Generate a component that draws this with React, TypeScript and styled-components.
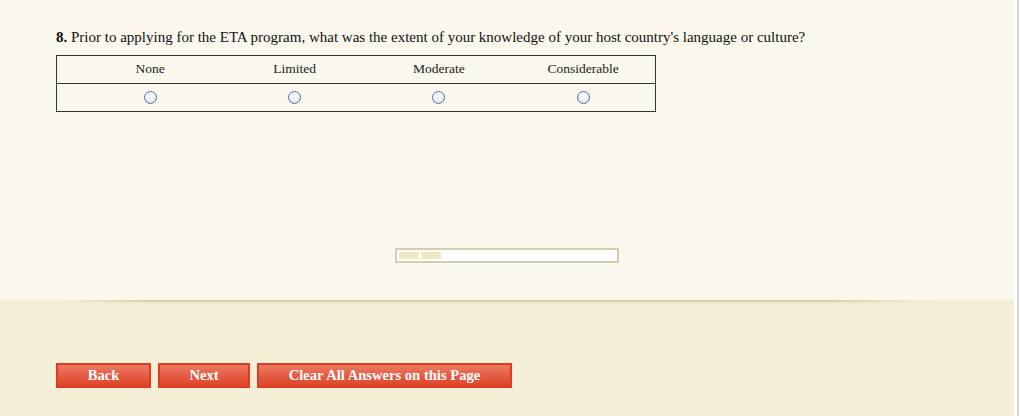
import { FC } from 'react';
import styled, { createGlobalStyle } from 'styled-components';

const options = ['None', 'Limited', 'Moderate', 'Considerable'];

const App: FC = () => {
  return (
    <>
      <GlobalStyle />
      <Page>
        <Survey>
          <QuestionPanel>
            <Question>
              <b>8.</b> Prior to applying for the ETA program, what was the extent of your
              knowledge of your host country's language or culture?
            </Question>
            <Grid>
              <thead>
                <tr>
                  <LabelCell />
                  {options.map((o) => (
                    <HeadCell key={o}>{o}</HeadCell>
                  ))}
                </tr>
              </thead>
              <tbody>
                <tr>
                  <LabelCell />
                  {options.map((o) => (
                    <RadioCell key={o}>
                      <Radio type="radio" name="q8" aria-label={o} />
                    </RadioCell>
                  ))}
                </tr>
              </tbody>
            </Grid>
            <Progress>
              <ProgressStep />
              <ProgressStep />
            </Progress>
          </QuestionPanel>
          <Footer>
            <Button $width={95}>Back</Button>
            <Button $width={92}>Next</Button>
            <Button $width={255}>Clear All Answers on this Page</Button>
          </Footer>
        </Survey>
        <Edge />
      </Page>
    </>
  );
};

export default App;

const GlobalStyle = createGlobalStyle`
  html, body {
    margin: 0;
    padding: 0;
    background: #fff;
  }
  body {
    font-family: "Liberation Serif", "Times New Roman", serif;
    color: #111;
  }
`;

const Page = styled.div`
  display: flex;
  width: 1020px;
  height: 416px;
`;

const Survey = styled.div`
  display: flex;
  flex-direction: column;
  width: 1014px;
  height: 416px;
`;

const Edge = styled.div`
  width: 6px;
  background: linear-gradient(
    to right,
    #fff 0,
    #fff 3px,
    #d6d6d6 3px,
    #d6d6d6 5px,
    #fff 5px
  );
`;

const QuestionPanel = styled.div`
  display: flex;
  flex-direction: column;
  align-items: flex-start;
  height: 300px;
  padding: 28px 0 0 56px;
  box-sizing: border-box;
  background: #faf8ec;
`;

const Question = styled.p`
  margin: 0;
  font-size: 15px;
  line-height: 18px;
  white-space: nowrap;

  b {
    font-weight: bold;
  }
`;

const Grid = styled.table`
  margin-top: 9px;
  width: 600px;
  border-collapse: collapse;
  border: 1px solid #333;
  table-layout: fixed;

  tr {
    height: 28px;
  }
  thead tr {
    border-bottom: 1px solid #333;
  }
`;

const LabelCell = styled.td`
  width: 21px;
  padding: 0;
`;

const HeadCell = styled.th`
  font-weight: normal;
  font-size: 13.5px;
  line-height: 16px;
  text-align: center;
  padding: 0 0 2px;
  color: #222;
`;

const RadioCell = styled.td`
  text-align: center;
  padding: 0 0 1px;
  vertical-align: middle;
`;

const Radio = styled.input`
  appearance: none;
  display: block;
  margin: 0 auto;
  width: 13px;
  height: 13px;
  border-radius: 50%;
  border: 1px solid #4a78a8;
  box-sizing: border-box;
  background: radial-gradient(circle at 50% 35%, #ffffff 0%, #f0f0f0 50%, #cfd6de 100%);
`;

const Progress = styled.div`
  display: flex;
  gap: 2px;
  align-self: center;
  margin: 136px 0 0 -56px;
  width: 224px;
  height: 15px;
  padding: 2px;
  box-sizing: border-box;
  border: 2px solid #d3cfae;
  background: #fff;
`;

const ProgressStep = styled.span`
  width: 20px;
  height: 7px;
  background: #efe8c2;
`;

const Footer = styled.div`
  position: relative;
  flex: 1;
  display: flex;
  gap: 7px;
  padding: 63px 0 0 56px;
  box-sizing: border-box;
  background: #f5efd7;

  &::before {
    content: '';
    position: absolute;
    top: 0;
    left: 60px;
    width: 875px;
    height: 4px;
    background: linear-gradient(
      to bottom,
      rgba(170, 160, 120, 0.55),
      rgba(190, 180, 140, 0.25) 55%,
      rgba(200, 190, 150, 0)
    );
    -webkit-mask-image: linear-gradient(
      to right,
      transparent 0,
      #000 10%,
      #000 88%,
      transparent 100%
    );
  }
`;

const Button = styled.button<{ $width: number }>`
  width: ${(p) => p.$width}px;
  height: 25px;
  padding: 0;
  border: 2px solid #de3c22;
  background: linear-gradient(to bottom, #eb7a65 0%, #e55d44 50%, #df4428 100%);
  color: #fff;
  font-family: "Liberation Serif", "Times New Roman", serif;
  font-size: 14.6px;
  font-weight: bold;
  cursor: pointer;
`;
